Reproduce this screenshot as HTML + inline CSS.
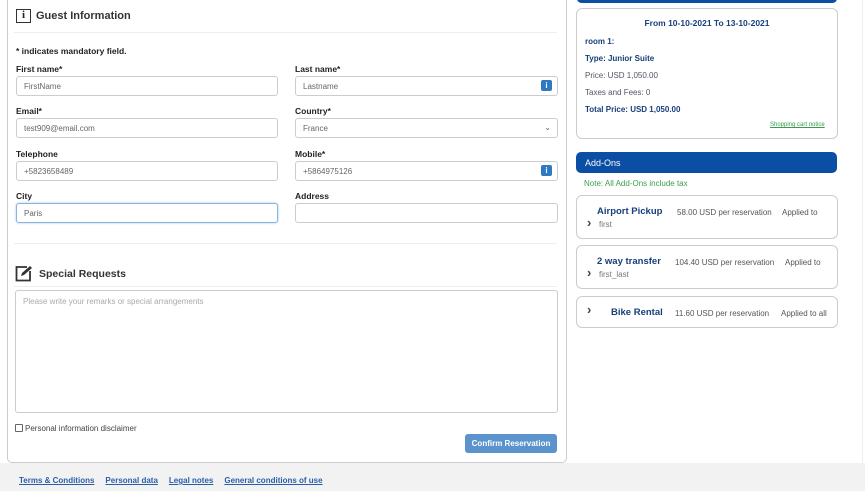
<!DOCTYPE html>
<html><head><meta charset="utf-8"><style>
*{box-sizing:border-box}
body{margin:0;width:865px;height:491px;background:#fff;font-family:"Liberation Sans",sans-serif;position:relative;overflow:hidden;color:#222}
.a{position:absolute}
.card{left:7px;top:-6px;width:560px;height:469px;border:1px solid #ccc;border-radius:5px;background:#fff}
.lbl{font-size:8.5px;font-weight:bold;color:#222}
.inp{height:20px;border:1px solid #ccc;border-radius:3px;font-size:8px;color:#666;padding:5px 0 0 7px;background:#fff}
.ib{width:11px;height:11px;background:#2f79c2;border-radius:2px;color:#fff;font-size:8px;font-weight:bold;text-align:center;line-height:11px}
.box{border:1px solid #ccc;border-radius:6px;background:#fff}
.blue{color:#173f7a}
.ft a{color:#2a5ea8;font-size:8px;font-weight:bold;text-decoration:underline;margin-right:11px}
.chev{font-size:13px;font-weight:bold;color:#444;line-height:13px}
</style></head><body>
<div class="a" style="left:0;top:463px;width:865px;height:28px;background:#f2f2f2"></div>
<div class="a card"></div>
<div class="a" style="left:16px;top:9px;width:15px;height:14px;border:1.5px solid #333;font-size:11px;font-weight:bold;text-align:center;line-height:11px;font-family:'Liberation Serif',serif">i</div>
<div class="a" style="left:36px;top:10px;font-size:11px;font-weight:bold;color:#333">Guest Information</div>
<div class="a" style="left:14px;top:32px;width:543px;border-top:1px solid #eee"></div>
<div class="a lbl" style="left:16px;top:46px">* indicates mandatory field.</div>

<div class="a lbl" style="left:16px;top:64px">First name*</div>
<div class="a lbl" style="left:295px;top:64px">Last name*</div>
<div class="a inp" style="left:16px;top:76px;width:262px">FirstName</div>
<div class="a inp" style="left:295px;top:76px;width:263px">Lastname</div>
<div class="a ib" style="left:541px;top:80px">i</div>

<div class="a lbl" style="left:16px;top:106px">Email*</div>
<div class="a lbl" style="left:295px;top:106px">Country*</div>
<div class="a inp" style="left:16px;top:118px;width:262px">test909@email.com</div>
<div class="a inp" style="left:295px;top:118px;width:263px">France<span style="position:absolute;right:6px;top:4px;font-size:8px">&#8964;</span></div>

<div class="a lbl" style="left:16px;top:149px">Telephone</div>
<div class="a lbl" style="left:295px;top:149px">Mobile*</div>
<div class="a inp" style="left:16px;top:161px;width:262px">+5823658489</div>
<div class="a inp" style="left:295px;top:161px;width:263px">+5864975126</div>
<div class="a ib" style="left:541px;top:165px">i</div>

<div class="a lbl" style="left:16px;top:191px">City</div>
<div class="a lbl" style="left:295px;top:191px">Address</div>
<div class="a inp" style="left:16px;top:203px;width:262px;border-color:#8ab4e0;box-shadow:0 0 2px #9cc3ea">Paris</div>
<div class="a inp" style="left:295px;top:203px;width:263px"></div>

<div class="a" style="left:14px;top:243px;width:543px;border-top:1px solid #eee"></div>
<svg class="a" style="left:15px;top:265px" width="18" height="17" viewBox="0 0 18 17"><path d="M12 2H1.5v13.5H15V6" fill="none" stroke="#333" stroke-width="1.8"/><path d="M6 11l1-3 8-7 2 2-8 7z" fill="#333"/></svg>
<div class="a" style="left:39px;top:268px;font-size:10.5px;font-weight:bold;color:#333">Special Requests</div>
<div class="a" style="left:14px;top:286px;width:543px;border-top:1px solid #eee"></div>
<div class="a" style="left:15px;top:290px;width:543px;height:123px;border:1px solid #ccc;border-radius:3px;font-size:8px;color:#aaa;padding:6px 0 0 7px">Please write your remarks or special arrangements</div>
<div class="a" style="left:15px;top:424px;width:8px;height:8px;border:1px solid #666;border-radius:1px"></div>
<div class="a" style="left:25px;top:424px;font-size:8px;color:#444">Personal information disclaimer</div>
<div class="a" style="left:465px;top:434px;width:92px;height:19px;background:#5b93cc;border-radius:3px;color:#fff;font-size:8px;font-weight:bold;text-align:center;line-height:19px">Confirm Reservation</div>

<div class="a ft" style="left:19px;top:470px"><a>Terms &amp; Conditions</a><a>Personal data</a><a>Legal notes</a><a>General conditions of use</a></div>

<div class="a" style="left:577px;top:-6px;width:260px;height:9px;background:#0a4fa3;border-radius:5px"></div>
<div class="a box" style="left:576px;top:8px;width:262px;height:131px"></div>
<div class="a blue" style="left:576px;top:18px;width:262px;text-align:center;font-size:8.5px;font-weight:bold">From 10-10-2021 To 13-10-2021</div>
<div class="a blue" style="left:585px;top:37px;font-size:8px;font-weight:bold">room 1:</div>
<div class="a blue" style="left:585px;top:54px;font-size:8px;font-weight:bold">Type: Junior Suite</div>
<div class="a" style="left:585px;top:71px;font-size:8px;color:#556">Price: USD 1,050.00</div>
<div class="a" style="left:585px;top:88px;font-size:8px;color:#556">Taxes and Fees: 0</div>
<div class="a blue" style="left:585px;top:105px;font-size:8px;font-weight:bold">Total Price: USD 1,050.00</div>
<div class="a" style="left:770px;top:122px;font-size:6px;color:#3a9a4a;text-decoration:underline">Shopping cart notice</div>

<div class="a" style="left:576px;top:152px;width:261px;height:21px;background:#0a4fa3;border-radius:5px;color:#fff;font-size:9px;padding:6px 0 0 9px">Add-Ons</div>
<div class="a" style="left:584px;top:179px;font-size:8px;color:#3aa04a">Note: All Add-Ons include tax</div>

<div class="a box" style="left:576px;top:195px;width:262px;height:44px"></div>
<div class="a blue" style="left:597px;top:206px;font-size:9.5px;font-weight:bold">Airport Pickup</div>
<div class="a" style="left:677px;top:208px;font-size:8px;color:#555">58.00 USD per reservation</div>
<div class="a" style="left:782px;top:208px;font-size:8px;color:#555">Applied to</div>
<div class="a chev" style="left:587px;top:216px">&#8250;</div>
<div class="a" style="left:599px;top:220px;font-size:8px;color:#777">first</div>

<div class="a box" style="left:576px;top:245px;width:262px;height:44px"></div>
<div class="a blue" style="left:597px;top:256px;font-size:9.5px;font-weight:bold">2 way transfer</div>
<div class="a" style="left:675px;top:258px;font-size:8px;color:#555">104.40 USD per reservation</div>
<div class="a" style="left:785px;top:258px;font-size:8px;color:#555">Applied to</div>
<div class="a chev" style="left:587px;top:266px">&#8250;</div>
<div class="a" style="left:599px;top:270px;font-size:8px;color:#777">first_last</div>

<div class="a box" style="left:576px;top:296px;width:262px;height:32px"></div>
<div class="a chev" style="left:587px;top:303px">&#8250;</div>
<div class="a blue" style="left:611px;top:307px;font-size:9.5px;font-weight:bold">Bike Rental</div>
<div class="a" style="left:675px;top:309px;font-size:8px;color:#555">11.60 USD per reservation</div>
<div class="a" style="left:781px;top:309px;font-size:8px;color:#555">Applied to all</div>
<div class="a" style="left:862px;top:0;width:1px;height:463px;background:#eee"></div>
</body></html>
